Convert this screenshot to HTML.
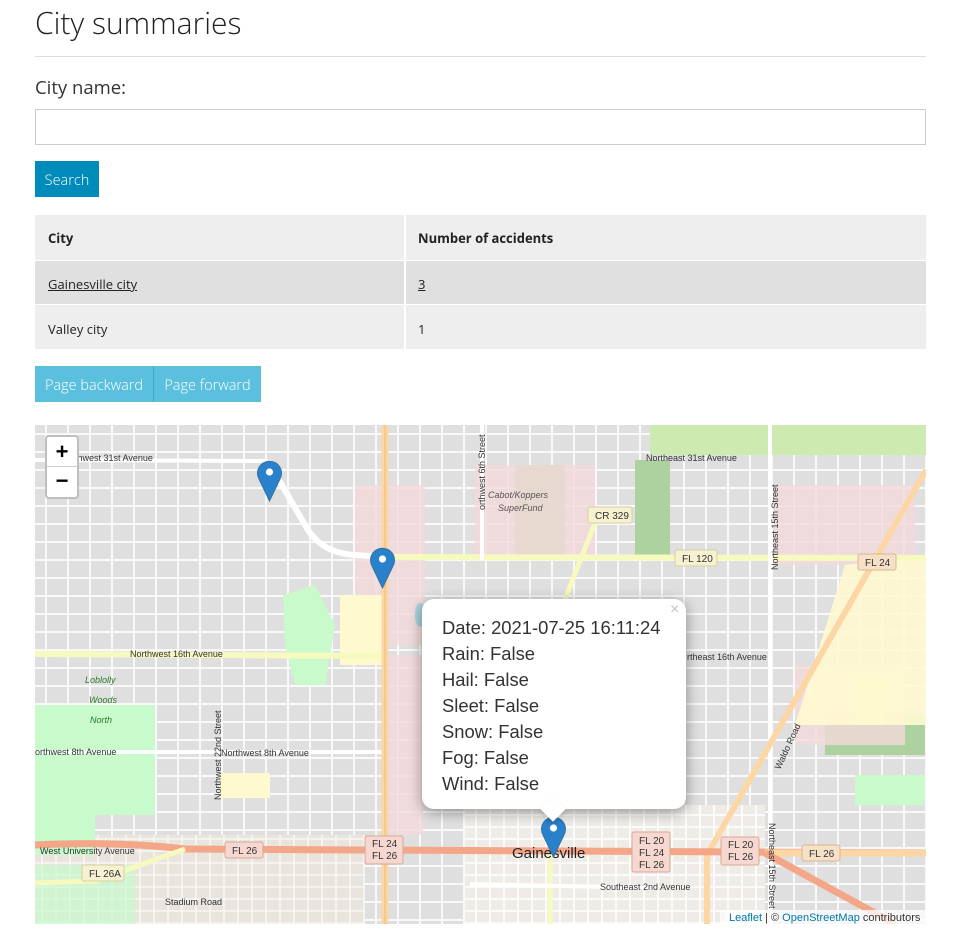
<!DOCTYPE html>
<html><head><meta charset="utf-8"><style>
body{margin:0;background:#fff;font-family:"Open Sans","Liberation Sans",sans-serif;color:#222;width:959px;height:941px;overflow:hidden;position:relative}
.a{position:absolute}
h1{position:absolute;left:35px;top:2px;margin:0;font-weight:300;font-size:30px;color:#222}
.hr{left:35px;top:56px;width:891px;height:1px;background:#ddd}
.lbl{left:35px;top:75px;font-size:18.5px;color:#333}
.inp{left:35px;top:109px;width:889px;height:34px;border:1px solid #ccc;background:#fff}
.btn{top:161px;left:35px;width:64px;height:36px;background:#008cba;color:#fff;font-size:14.5px;line-height:39px;text-align:center;font-weight:300}
.t{font-size:13px;color:#222}
.pb{top:366px;height:36px;background:#5bc0de;color:#fff;font-size:14.5px;line-height:39px;text-align:center;font-weight:300}
.map{left:35px;top:425px;width:891px;height:499px;overflow:hidden;background:#e0dfdf}
.pop{left:422px;top:599px;width:264px;height:210px;background:#fff;border-radius:12px;box-shadow:0 3px 14px rgba(0,0,0,.4);font-family:"Liberation Sans",Arial,sans-serif;font-size:18.4px;color:#333}
.pop div{position:absolute;left:20px}
</style></head><body>
<h1>City summaries</h1>
<div class="a hr"></div>
<div class="a lbl">City name:</div>
<div class="a inp"></div>
<div class="a btn">Search</div>
<div class="a" style="left:35px;top:215px;width:891px;height:45px;background:#eee"></div>
<div class="a" style="left:35px;top:261px;width:891px;height:43px;background:#e0e0e0"></div>
<div class="a" style="left:35px;top:305px;width:891px;height:44px;background:#eee"></div>
<div class="a" style="left:404px;top:215px;width:2px;height:134px;background:#fff"></div>
<div class="a" style="left:35px;top:260px;width:891px;height:1px;background:#fff"></div>
<div class="a" style="left:35px;top:304px;width:891px;height:1px;background:#fff"></div>
<div class="a t" style="left:48px;top:229px;font-weight:bold">City</div>
<div class="a t" style="left:418px;top:229px;font-weight:bold">Number of accidents</div>
<div class="a t" style="left:48px;top:275px;text-decoration:underline">Gainesville city</div>
<div class="a t" style="left:418px;top:275px;text-decoration:underline">3</div>
<div class="a t" style="left:48px;top:320px">Valley city</div>
<div class="a t" style="left:418px;top:320px">1</div>
<div class="a pb" style="left:35px;width:118px">Page backward</div>
<div class="a" style="left:153px;top:366px;width:1px;height:36px;background:#3fa9c9"></div>
<div class="a pb" style="left:154px;width:107px">Page forward</div>

<div class="a map">
<svg width="891" height="499" xmlns="http://www.w3.org/2000/svg" font-family="Liberation Sans,sans-serif">
<defs>
<pattern id="g" width="22" height="18" patternUnits="userSpaceOnUse"><path d="M0 9H22M11 0V18" stroke="#fff" stroke-width="2"/></pattern>
<pattern id="g2" width="14" height="12" patternUnits="userSpaceOnUse"><path d="M0 6H14M7 0V12" stroke="#fff" stroke-width="1.6"/></pattern>
</defs>
<rect width="891" height="499" fill="#e0dfdf"/>
<rect width="891" height="499" fill="url(#g)" opacity=".8"/>
<rect x="430" y="380" width="300" height="119" fill="#efece8"/>
<rect x="430" y="380" width="300" height="119" fill="url(#g2)"/>
<rect x="0" y="410" width="330" height="89" fill="#e9e4dc"/>
<rect x="0" y="410" width="330" height="89" fill="url(#g2)" opacity=".7"/>
<rect x="615" y="0" width="276" height="30" fill="#cdebb0"/>
<rect x="600" y="35" width="35" height="100" fill="#aed1a0"/>
<rect x="480" y="40" width="50" height="90" fill="#b8d8a8"/>
<path d="M248 170 L280 160 L300 200 L290 260 L260 260 L250 220Z" fill="#c8facc"/>
<rect x="0" y="280" width="120" height="110" fill="#c8facc"/>
<rect x="0" y="390" width="60" height="40" fill="#c8facc"/>
<rect x="790" y="290" width="100" height="40" fill="#aed1a0"/>
<rect x="820" y="350" width="70" height="30" fill="#c8facc"/>
<rect x="0" y="440" width="100" height="59" fill="#c8facc" opacity=".7"/>
<rect x="320" y="60" width="70" height="160" fill="#f2dad9" opacity=".8"/>
<rect x="352" y="230" width="36" height="180" fill="#f2dad9" opacity=".8"/>
<rect x="440" y="40" width="120" height="90" fill="#f2dad9" opacity=".8"/>
<rect x="740" y="60" width="140" height="80" fill="#f2dad9" opacity=".8"/>
<rect x="760" y="240" width="110" height="80" fill="#f2dad9" opacity=".8"/>
<path d="M810 140 L891 130 L891 300 L760 300Z" fill="#fff9d0" opacity=".9"/>
<rect x="305" y="170" width="45" height="70" fill="#fff9d0"/>
<rect x="185" y="348" width="50" height="25" fill="#fff9d0"/>
<rect x="820" y="250" width="30" height="50" fill="#fff9d0"/>
<ellipse cx="385" cy="190" rx="5" ry="12" fill="#aad3df"/>
<path d="M233 36 L270 100 Q285 128 320 130 L350 132" stroke="#fff" stroke-width="6" fill="none"/>
<path d="M0 35 L233 36" stroke="#fff" stroke-width="4" fill="none"/>
<path d="M0 327 L350 327" stroke="#fff" stroke-width="4"/>
<path d="M350 132 L891 133" stroke="#f7fabf" stroke-width="6"/>
<path d="M0 229 L350 231" stroke="#f7fabf" stroke-width="6"/>
<path d="M565 85 L520 200" stroke="#f7fabf" stroke-width="5"/>
<path d="M515 380 L515 499" stroke="#f7fabf" stroke-width="5"/>
<path d="M447 0 V135" stroke="#fff" stroke-width="4"/>
<path d="M735 0 V499" stroke="#fff" stroke-width="4"/>
<path d="M350 0 V499" stroke="#fcd6a4" stroke-width="7"/>
<path d="M350 0 V499" stroke="#e8a85c" stroke-width="1" opacity=".6"/>
<path d="M891 45 L672 430 L672 499" stroke="#fcd6a4" stroke-width="6" fill="none"/>
<path d="M0 420 Q80 416 150 424 L891 428" stroke="#f3a688" stroke-width="7" fill="none"/>
<path d="M730 428 L891 428" stroke="#fcd6a4" stroke-width="7"/>
<path d="M730 428 L860 499" stroke="#f3a688" stroke-width="7"/>
<path d="M0 458 L60 456 L150 424" stroke="#f7fabf" stroke-width="5" fill="none"/>
<path d="M435 459 L620 463" stroke="#fff" stroke-width="4"/>
<g font-size="9" fill="#333">
<text x="40" y="36">thwest 31st Avenue</text>
<text x="611" y="36">Northeast 31st Avenue</text>
<text x="95" y="232">Northwest 16th Avenue</text>
<text x="652" y="235">rtheast 16th Avenue</text>
<text x="0" y="330">orthwest 8th Avenue</text>
<text x="186" y="331">Northwest 8th Avenue</text>
<text x="5" y="429">West University Avenue</text>
<text x="565" y="465">Southeast 2nd Avenue</text>
<text x="130" y="480">Stadium Road</text>
<text x="453" y="73" font-style="italic" fill="#555">Cabot/Koppers</text>
<text x="463" y="86" font-style="italic" fill="#555">SuperFund</text>
<text x="50" y="258" font-style="italic" fill="#2a7a2a">Loblolly</text>
<text x="54" y="278" font-style="italic" fill="#2a7a2a">Woods</text>
<text x="55" y="298" font-style="italic" fill="#2a7a2a">North</text>
<text transform="translate(186 375) rotate(-90)">Northwest 22nd Street</text>
<text transform="translate(743 145) rotate(-90)">Northeast 15th Street</text>
<text transform="translate(734 398) rotate(90)">Northeast 15th Street</text>
<text transform="translate(450 85) rotate(-90)">orthwest 6th Street</text>
<text transform="translate(745 345) rotate(-65)">Waldo Road</text>
<text x="477" y="433" font-size="15" fill="#222">Gainesville</text>
</g>
<g font-size="10" fill="#333">
<rect x="553" y="82" width="44" height="16" rx="2" fill="#f6f1d0" stroke="#d8d0a0"/><text x="560" y="94">CR 329</text>
<rect x="640" y="125" width="42" height="16" rx="2" fill="#f6f1d0" stroke="#d8d0a0"/><text x="647" y="137">FL 120</text>
<rect x="823" y="129" width="38" height="16" rx="2" fill="#f6e0c8" stroke="#d8b890"/><text x="830" y="141">FL 24</text>
<rect x="190" y="417" width="38" height="16" rx="2" fill="#f6d8d0" stroke="#d8a898"/><text x="197" y="429">FL 26</text>
<rect x="330" y="411" width="38" height="28" rx="2" fill="#f6d8d0" stroke="#d8a898"/><text x="337" y="422">FL 24</text><text x="337" y="434">FL 26</text>
<rect x="597" y="407" width="38" height="40" rx="2" fill="#f6d8d0" stroke="#d8a898"/><text x="604" y="419">FL 20</text><text x="604" y="431">FL 24</text><text x="604" y="443">FL 26</text>
<rect x="686" y="412" width="38" height="28" rx="2" fill="#f6d8d0" stroke="#d8a898"/><text x="693" y="423">FL 20</text><text x="693" y="435">FL 26</text>
<rect x="767" y="420" width="38" height="16" rx="2" fill="#f6e0c8" stroke="#d8b890"/><text x="774" y="432">FL 26</text>
<rect x="47" y="440" width="42" height="16" rx="2" fill="#f6f1d0" stroke="#d8d0a0"/><text x="54" y="452">FL 26A</text>
</g>
<g fill="#2a81cb" stroke="#3274a3" stroke-width="1">
<path d="M234.5 76 L224 54 A12 12 0 1 1 245 54 Z"/>
<circle cx="234.5" cy="47" r="3.6" fill="#fff" stroke="none"/>
<path d="M347.5 163 L337 141 A12 12 0 1 1 358 141 Z"/>
<circle cx="347.5" cy="134" r="3.6" fill="#fff" stroke="none"/>
<path d="M518.5 432 L508 410 A12 12 0 1 1 529 410 Z"/>
<circle cx="518.5" cy="403" r="3.6" fill="#fff" stroke="none"/>
</g>
<rect x="685" y="485" width="206" height="14" fill="#fff" opacity=".75"/>
<text x="694" y="496" font-size="11" fill="#333"><tspan fill="#0078a8">Leaflet</tspan> | © <tspan fill="#0078a8">OpenStreetMap</tspan> contributors</text>
</svg>
</div>
<div class="a" style="left:45px;top:435px;width:30px;height:60px;border:2px solid rgba(0,0,0,.25);border-radius:4px;background:#fff;overflow:hidden">
<div style="height:29px;border-bottom:1px solid #ccc;text-align:center;font:bold 22px/29px 'Liberation Sans',sans-serif;color:#000">+</div>
<div style="text-align:center;font:bold 22px/28px 'Liberation Sans',sans-serif;color:#000">−</div>
</div>
<div class="a pop">
<div style="left:248px;top:2px;font-size:16px;color:#c3c3c3">×</div>
<div style="top:18px">Date: 2021-07-25 16:11:24</div>
<div style="top:44px">Rain: False</div>
<div style="top:70px">Hail: False</div>
<div style="top:96px">Sleet: False</div>
<div style="top:122px">Snow: False</div>
<div style="top:148px">Fog: False</div>
<div style="top:174px">Wind: False</div>
</div>
<div class="a" style="left:544px;top:800px;width:18px;height:18px;background:#fff;transform:rotate(45deg);box-shadow:2px 2px 4px rgba(0,0,0,.15)"></div>
</body></html>
